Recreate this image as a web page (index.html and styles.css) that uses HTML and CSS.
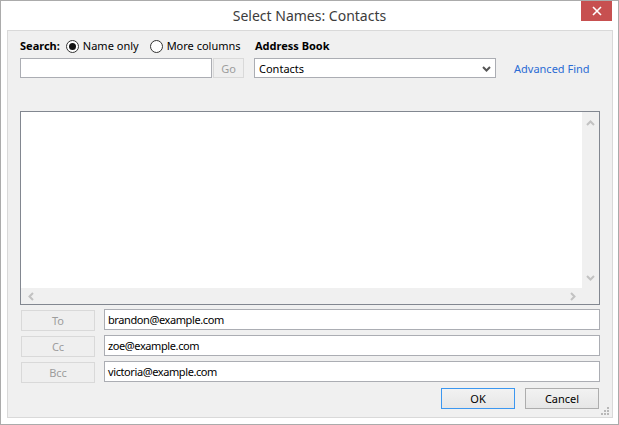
FILE: index.html
```html
<!DOCTYPE html>
<html lang="en">
<head>
<meta charset="utf-8">
<title>Select Names: Contacts</title>
<link rel="stylesheet" href="styles.css">
</head>
<body>
<div class="window">
  <div class="titlebar">
    <span></span>
    <span class="title">Select Names: Contacts</span>
    <div class="close">
      <svg width="10" height="10" viewBox="0 0 10 10"><path d="M1 1 L9 9 M9 1 L1 9" stroke="#fff" stroke-width="1.6" fill="none"/></svg>
    </div>
  </div>
  <div class="panel">
    <div class="top">
      <div class="col search-col">
        <div class="labelrow">
          <span class="bold">Search:</span>
          <span class="radio checked"><span class="circle"><span class="dot"></span></span>Name only</span>
          <span class="radio"><span class="circle"></span>More columns</span>
        </div>
        <div class="ctrlrow">
          <div class="field search"></div>
          <div class="btn disabled go">Go</div>
        </div>
      </div>
      <div class="col book-col">
        <div class="labelrow"><span class="bold book-label">Address Book</span></div>
        <div class="ctrlrow">
          <div class="select">
            <span>Contacts</span>
            <svg width="9" height="6" viewBox="0 0 9 6"><path d="M1 1 L4.5 4.5 L8 1" stroke="#555" stroke-width="2" fill="none"/></svg>
          </div>
        </div>
      </div>
      <div class="col link-col">
        <div class="labelrow"></div>
        <div class="ctrlrow"><a class="link" href="#">Advanced Find</a></div>
      </div>
    </div>

    <div class="listbox">
      <div class="list-main">
        <div class="list-area"></div>
        <div class="vscroll">
          <svg width="9" height="6" viewBox="0 0 9 6"><path d="M1 5 L4.5 1.5 L8 5" stroke="#c2c2c2" stroke-width="2" fill="none"/></svg>
          <svg width="9" height="6" viewBox="0 0 9 6"><path d="M1 1 L4.5 4.5 L8 1" stroke="#c2c2c2" stroke-width="2" fill="none"/></svg>
        </div>
      </div>
      <div class="hscroll">
        <div class="hscroll-track">
          <svg width="6" height="9" viewBox="0 0 6 9"><path d="M5 1 L1.5 4.5 L5 8" stroke="#c2c2c2" stroke-width="2" fill="none"/></svg>
          <svg width="6" height="9" viewBox="0 0 6 9"><path d="M1 1 L4.5 4.5 L1 8" stroke="#c2c2c2" stroke-width="2" fill="none"/></svg>
        </div>
        <div class="corner"></div>
      </div>
    </div>

    <div class="recips">
      <div class="recip-row">
        <div class="btn disabled rbtn">To</div>
        <div class="field recip">brandon@example.com</div>
      </div>
      <div class="recip-row">
        <div class="btn disabled rbtn">Cc</div>
        <div class="field recip">zoe@example.com</div>
      </div>
      <div class="recip-row">
        <div class="btn disabled rbtn">Bcc</div>
        <div class="field recip">victoria@example.com</div>
      </div>
    </div>

    <div class="actions">
      <div class="btn action default">OK</div>
      <div class="btn action">Cancel</div>
    </div>

    <div class="grip">
      <svg width="9" height="9" viewBox="0 0 9 9" fill="#b8b8b8">
        <rect x="6" y="0" width="2" height="2"/>
        <rect x="3" y="3" width="2" height="2"/><rect x="6" y="3" width="2" height="2"/>
        <rect x="0" y="6" width="2" height="2"/><rect x="3" y="6" width="2" height="2"/><rect x="6" y="6" width="2" height="2"/>
      </svg>
    </div>
  </div>
</div>
</body>
</html>
```

FILE: styles.css
```css
* { box-sizing: border-box; }

html, body {
  margin: 0;
  padding: 0;
  background: #ffffff;
}

body {
  font-family: "Segoe UI", "Noto Sans", "Open Sans", sans-serif;
  font-size: 11px;
  color: #000;
}

.window {
  width: 619px;
  height: 425px;
  border: 1px solid #ababab;
  background: #ffffff;
  display: flex;
  flex-direction: column;
}

.titlebar {
  height: 29px;
  display: grid;
  grid-template-columns: 1fr auto 1fr;
  align-items: start;
}

.title {
  font-size: 14px;
  color: #3c3c3c;
  line-height: 20px;
  padding-top: 5px;
  white-space: nowrap;
}

.close {
  justify-self: end;
  margin-right: 6px;
  width: 31px;
  height: 20px;
  background: #c75050;
  display: flex;
  align-items: center;
  justify-content: center;
}

.panel {
  position: relative;
  margin: 0 5px 0 6px;
  height: 388px;
  border: 1px solid #d9d9d9;
  background: #f0f0f0;
  padding: 7px 12px 8px 12px;
}

.bold { font-weight: bold; }

.top {
  display: flex;
}

.col {
  display: flex;
  flex-direction: column;
  gap: 4px;
}

.labelrow {
  height: 16px;
  line-height: 16px;
  display: flex;
  align-items: center;
  white-space: nowrap;
}

.ctrlrow {
  height: 20px;
  display: flex;
  align-items: center;
}

.search-col { width: 224px; }
.book-col { width: 242px; margin-left: 10px; }
.link-col { margin-left: 18px; }

.book-label { margin-left: 1px; }

.radio {
  display: inline-flex;
  align-items: center;
  margin-left: 6px;
}
.radio + .radio { margin-left: 11px; }

.circle {
  width: 13px;
  height: 13px;
  border: 1px solid #333;
  border-radius: 50%;
  background: #fff;
  margin-right: 4px;
  display: flex;
  align-items: center;
  justify-content: center;
}
.dot {
  width: 7px;
  height: 7px;
  border-radius: 50%;
  background: #111;
}

.field {
  background: #fff;
  border: 1px solid #abadb3;
  height: 20px;
  line-height: 18px;
  padding: 0 3px;
  white-space: nowrap;
}

.search { width: 192px; }

.btn {
  display: flex;
  align-items: center;
  justify-content: center;
  height: 20px;
}

.btn.disabled {
  border: 1px solid #d9d9d9;
  background: #efefef;
  color: #9d9d9d;
}

.go {
  width: 31px;
  margin-left: 1px;
  height: 20px;
}

.select {
  width: 242px;
  height: 20px;
  background: #fff;
  border: 1px solid #abadb3;
  display: flex;
  align-items: center;
  justify-content: space-between;
  padding: 0 4px 0 4px;
}
.select svg { margin-top: 2px; }

.link {
  color: #2a6bd4;
  text-decoration: none;
  white-space: nowrap;
}

.listbox {
  margin-top: 33px;
  width: 580px;
  height: 194px;
  border: 1px solid #828790;
  background: #fff;
  display: flex;
  flex-direction: column;
}

.list-main {
  flex: 1;
  display: flex;
}

.list-area {
  flex: 1;
  background: #fff;
}

.vscroll {
  width: 17px;
  background: #f0f0f0;
  display: flex;
  flex-direction: column;
  align-items: center;
  justify-content: space-between;
  padding: 8px 0 7px 0;
}

.hscroll {
  height: 16px;
  display: flex;
  background: #f0f0f0;
}

.hscroll-track {
  flex: 1;
  display: flex;
  align-items: center;
  justify-content: space-between;
  padding: 0 6px 0 7px;
}

.corner {
  width: 17px;
  background: #f0f0f0;
}

.recips {
  margin-top: 4px;
  display: flex;
  flex-direction: column;
  gap: 4px;
}

.recip-row {
  display: flex;
  align-items: flex-start;
  height: 22px;
}

.rbtn {
  width: 74px;
  height: 21px;
  margin-top: 1px;
  margin-left: 1px;
}

.recip {
  margin-left: 9px;
  width: 496px;
  height: 21px;
  line-height: 19px;
  padding-left: 3px;
  font-size: 11px;
  letter-spacing: -0.4px;
}

.actions {
  margin-top: 5px;
  width: 580px;
  display: flex;
  justify-content: flex-end;
  gap: 10px;
  padding-right: 1px;
}

.action {
  width: 74px;
  height: 21px;
  border: 1px solid #adadad;
  background: linear-gradient(#f2f2f2, #e6e6e6);
  color: #000;
}

.action.default {
  border-color: #3c97f0;
}

.grip {
  position: absolute;
  right: 2px;
  bottom: 1px;
  width: 9px;
  height: 9px;
  display: flex;
}
```
